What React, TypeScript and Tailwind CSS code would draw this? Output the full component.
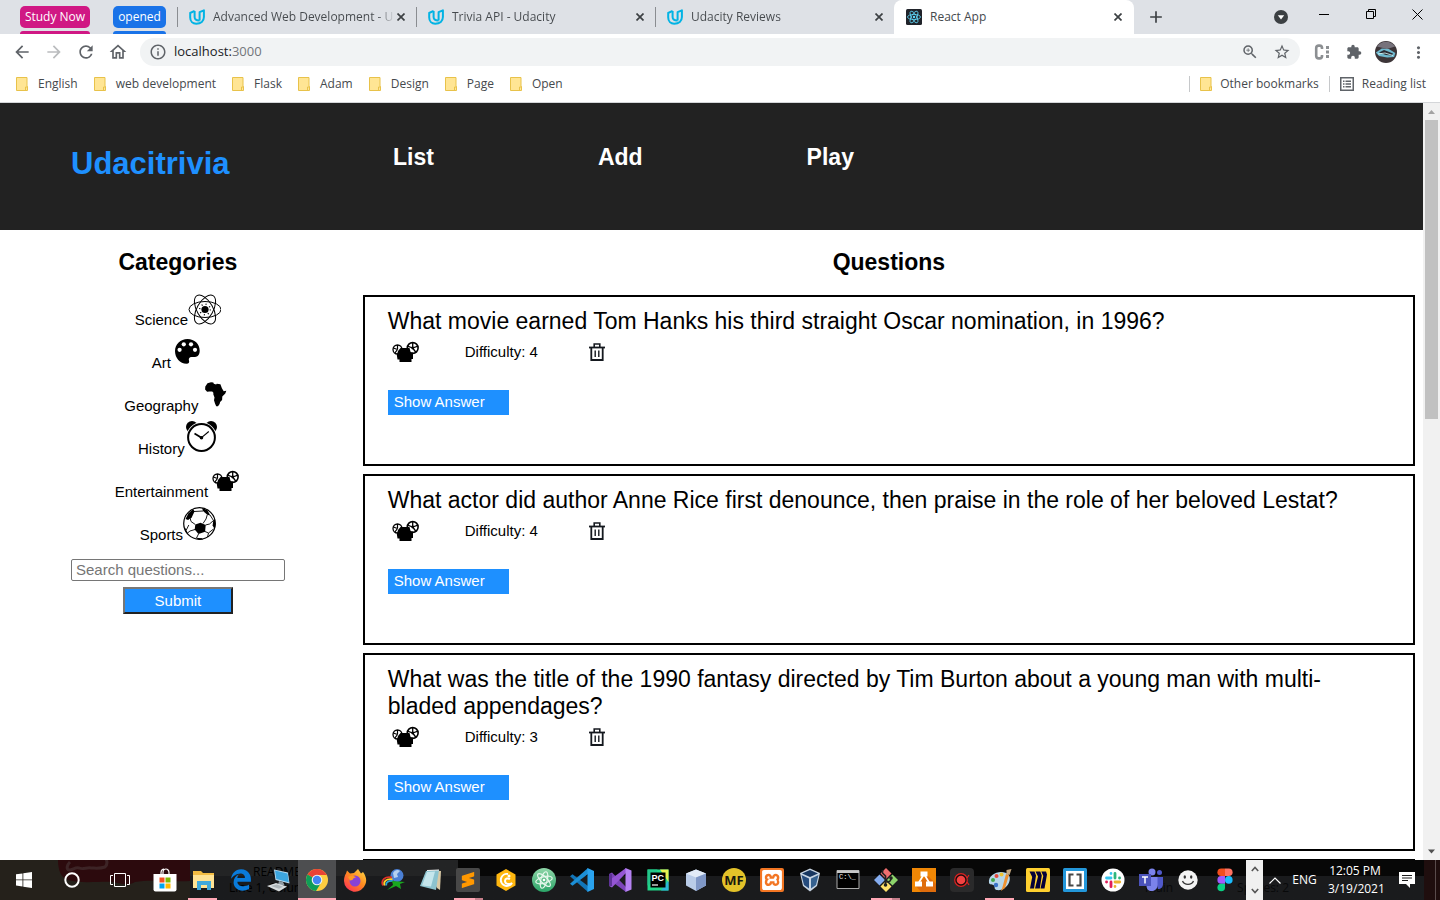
import React from "react";
import {
  MdAdd,
  MdArrowBack,
  MdArrowForward,
  MdExtension,
  MdInfoOutline,
  MdMoreVert,
  MdOutlineHome,
  MdRefresh,
  MdStarBorder,
  MdZoomIn,
} from "react-icons/md";
import { FaEdgeLegacy } from "react-icons/fa";
import { SiSublimetext, SiXampp } from "react-icons/si";

/* ---------- browser icons ---------- */

function UdacityIcon() {
  return (
    <svg className="size-4 shrink-0" viewBox="0 0 16 16" fill="none" stroke="#02b3e4" strokeWidth="2" strokeLinejoin="round" aria-hidden="true">
      <path d="M5.6 1.9 1.2 4v4.6c0 3.8 2.6 6.2 6 6.2 4.6 0 7.7-2.5 7.7-6.7V1.300l-4.300 1.900v8.200" />
      <path d="M5.6 1.900v6c0 2.400 1.700 3.700 5 3.500" />
    </svg>
  );
}

function ReactFavicon() {
  return (
    <svg className="size-4 shrink-0" viewBox="0 0 16 16" aria-hidden="true">
      <rect width="16" height="16" rx="1.5" fill="#20232a" />
      <g fill="none" stroke="#61dafb" strokeWidth=".8">
        <ellipse cx="8" cy="8" rx="6.5" ry="2.6" />
        <ellipse cx="8" cy="8" rx="6.5" ry="2.6" transform="rotate(60 8 8)" />
        <ellipse cx="8" cy="8" rx="6.5" ry="2.6" transform="rotate(120 8 8)" />
      </g>
      <circle cx="8" cy="8" r="1.2" fill="#61dafb" />
    </svg>
  );
}

function FolderIcon() {
  return (
    <svg className="h-[14px] w-3 shrink-0" viewBox="0 0 12 14" aria-hidden="true">
      <path d="M.5.5h10.500v9h.5v4H.5z" fill="#ffe594" stroke="#e8c24a" />
      <path d="M9.500 13.500v-3.500h2" fill="none" stroke="#e8c24a" />
    </svg>
  );
}

/* ---------- trivia icons, all on a 33px square ---------- */

function ScienceIcon() {
  return (
    <svg className="size-[33px] shrink-0" viewBox="0 0 33 33" aria-hidden="true">
      <g fill="none" stroke="#000" strokeWidth="1">
        <ellipse cx="17" cy="17.5" rx="16" ry="8" />
        <ellipse cx="17" cy="17.5" rx="16" ry="8" transform="rotate(60 17 17.5)" />
        <ellipse cx="17" cy="17.5" rx="16" ry="8" transform="rotate(120 17 17.5)" />
        <circle cx="17" cy="17.5" r="5.3" strokeDasharray="1 3.16" strokeWidth="1.4" />
      </g>
      <circle cx="17" cy="17.5" r="3.6" />
    </svg>
  );
}

function ArtIcon() {
  return (
    <svg className="size-[33px] shrink-0" viewBox="0 0 33 33" aria-hidden="true">
      <path d="M16.500 4C9.500 4 4 9.200 4 16c0 7 5 12.500 11.500 12.800 2.500 0 3-1.500 2.500-3-.6-2.300.2-3.800 2.500-3.900 3 .1 4.500.3 6.200-.9 1.400-1 2-3 2-5.200C28.700 9 23.500 4 16.500 4z" />
      <circle cx="12.8" cy="9.3" r="2.1" fill="#fff" />
      <circle cx="20" cy="9.3" r="2.1" fill="#fff" />
      <circle cx="8.6" cy="14.8" r="2.1" fill="#fff" />
      <circle cx="24" cy="14.8" r="2.1" fill="#fff" />
    </svg>
  );
}

function GeographyIcon() {
  return (
    <svg className="size-[33px] shrink-0" viewBox="0 0 33 33" aria-hidden="true">
      <path d="M9.500 5.200 13 4.200l2.300.2.500 1.300 2.300.9.700-.9 3.600.6 1.500 4 1.800 2.900 2.600-.4-1 2.600-3 3.200-.2 3.500-2 1.800-.5 2-1.600 2.300-1.800.1-1.200-2.800-1-3.200.5-2.800-1.200-3.300.1-1.500-1.200-1.200-2.800.1-2.300.2-2-2.300.2-3z" />
    </svg>
  );
}

function HistoryIcon() {
  return (
    <svg className="size-[33px] shrink-0" viewBox="0 0 33 33" aria-hidden="true">
      <circle cx="7" cy="6" r="6" />
      <circle cx="26" cy="6" r="6" />
      <circle cx="16.5" cy="16.5" r="15.2" fill="#fff" />
      <circle cx="16.5" cy="16.5" r="13.4" fill="#fff" stroke="#000" strokeWidth="2" />
      <path d="m16.500 16.700-7-4.200" stroke="#000" strokeWidth="1.8" />
      <path d="m16.500 16.700 7.300-6.200" stroke="#000" strokeWidth="1.1" />
      <circle cx="16.5" cy="16.7" r="1.8" />
    </svg>
  );
}

function EntertainmentIcon() {
  return (
    <svg className="size-[33px] shrink-0" viewBox="0 0 33 33" aria-hidden="true">
      <g fill="#fff" stroke="#000">
        <circle cx="9.5" cy="14.5" r="4.5" strokeWidth="1.3" />
        <path d="M9.500 14.500V10M9.500 14.500l-4.200-1.500M9.500 14.500l-2.700 3.700" strokeWidth="1.2" />
        <circle cx="24.7" cy="13" r="5.4" strokeWidth="1.6" />
        <path d="M24.700 13V8M24.700 13l-5.200-1.800M24.700 13l3.300 4.500M24.700 13l5.200-1.800" strokeWidth="1.300" />
      </g>
      <circle cx="24.7" cy="13" r="1.4" />
      <path d="M10 16l2.500-3h9l1.200 4.500H25v6.500h-1.500v3h-12v-2.500H9.500l-.7-4.500z" />
    </svg>
  );
}

function SportsIcon() {
  return (
    <svg className="size-[33px] shrink-0" viewBox="0 0 33 33" aria-hidden="true">
      <circle cx="16.5" cy="16.5" r="15.8" fill="#fff" stroke="#000" strokeWidth="1.2" />
      <path d="m12.300 17.500 5.200-1.800 5.200 2.200-.6 6.800-6.600 2.300-3.800-4.500z" />
      <path d="M5.500 6.200 10.300 2l1.200 2.500-2.700 5.800-3.700 2.700-2.600-1z" />
      <path d="m19 .9 5.300 2 3 5.500-3-.7-4.300-3.700z" />
      <path d="m32 12 .6 5.500-1 4.500-2-3.500.7-5z" />
      <path d="M1 18.500 3.300 23l2.500 5.500-3.300-4.300z" />
      <path d="m12.500 30.800 6.500.5 1 1.300-4 .2z" />
      <path
        d="M20 16.500 23 12l1.300-4.300M12.300 17.500 8 14.500l-1-4M22.500 18l4-1 4-3.500M22 24.500l3.500 1.500 5-4M15.500 27l-2 4M3.300 23l2.500-5M11 4.500l9-.5M25.500 26l-1 4M27 8l3.500 5.500M12 22.500l-5 1.500-2.500 2"
        fill="none"
        stroke="#000"
        strokeWidth=".9"
      />
    </svg>
  );
}

function TrashIcon() {
  return (
    <svg className="h-[18px] w-4" viewBox="0 0 16 18" fill="none" stroke="#15191f" aria-hidden="true">
      <path d="M0 4.500h16" strokeWidth="1.8" />
      <path d="M5.200 4V1h5.600V4" strokeWidth="1.6" />
      <path d="M2.300 4.500v12.500h11.400V4.500" strokeWidth="1.8" />
      <path d="M6.200 7.500v6.500M9.800 7.500v6.500" strokeWidth="1.4" />
    </svg>
  );
}

/* ---------- browser window ---------- */

const tabs = [
  { title: "Advanced Web Development - U", icon: <UdacityIcon /> },
  { title: "Trivia API - Udacity", icon: <UdacityIcon /> },
  { title: "Udacity Reviews", icon: <UdacityIcon /> },
];

function CloseTab({ label }: { label: string }) {
  return (
    <button type="button" aria-label={`Close ${label}`} className="flex size-4 shrink-0 items-center justify-center">
      <svg className="size-2" viewBox="0 0 8 8" stroke="#3c4043" strokeWidth="1.7" aria-hidden="true">
        <path d="m.5.5 7 7m0-7-7 7" />
      </svg>
    </button>
  );
}

function TabStrip() {
  return (
    <div className="flex h-[34px] shrink-0 bg-[#dee1e6] text-xs text-[#45494d]">
      <div className="flex w-[177px] shrink-0 gap-[23px] pl-5 pt-[6px] text-white">
        <div className="flex w-[70px] flex-col gap-[3px]">
          <button type="button" className="h-[22px] whitespace-nowrap rounded-[5px] bg-[#d01884]">Study Now</button>
          <span className="h-[3px] rounded-t-sm bg-[#d01884]" />
        </div>
        <div className="flex w-[53px] flex-col gap-[3px]">
          <button type="button" className="h-[22px] rounded-[5px] bg-[#1a73e8]">opened</button>
          <span className="h-[3px] rounded-t-sm bg-[#1a73e8]" />
        </div>
      </div>
      {tabs.map((t) => (
        <div key={t.title} className="flex w-[239px] min-w-0 items-center">
          <span className="h-5 w-px bg-[#8a8d91]" />
          <span className="ml-[11px] flex">{t.icon}</span>
          <span className="ml-2 w-[182px] whitespace-nowrap bg-linear-to-r from-[#45494d] from-90% to-[#dee1e6] bg-clip-text text-transparent">
            {t.title}
          </span>
          <span className="-ml-[2px] flex"><CloseTab label={t.title} /></span>
        </div>
      ))}
      <div className="flex w-60 items-center rounded-t-lg bg-white pl-3">
        <ReactFavicon />
        <span className="ml-2 flex-1">React App</span>
        <span className="mr-2 flex"><CloseTab label="React App" /></span>
      </div>
      <button type="button" aria-label="New tab" className="ml-3 text-[#3c4043]"><MdAdd className="size-5" /></button>
      <div className="ml-auto flex items-center text-black">
        <button type="button" aria-label="Search tabs" className="mr-[31px]">
          <svg className="size-[14px]" viewBox="0 0 14 14" aria-hidden="true">
            <circle cx="7" cy="7" r="7" fill="#3c4043" />
            <path d="M3.800 5.300h6.400L7 9.600z" fill="#fff" />
          </svg>
        </button>
        <button type="button" aria-label="Minimize" className="mb-[6px] mr-9">
          <svg className="size-[11px]" viewBox="0 0 11 11" stroke="#000" aria-hidden="true"><path d="M0 5.500h10" /></svg>
        </button>
        <button type="button" aria-label="Restore" className="mb-[6px] mr-9">
          <svg className="size-[10px]" viewBox="0 0 10 10" fill="none" stroke="#000" aria-hidden="true"><path d="M.5 2.500h7v7h-7zM2.500 2.500v-2h7v7h-2" /></svg>
        </button>
        <button type="button" aria-label="Close window" className="mb-[6px] mr-[17px]">
          <svg className="size-[11px]" viewBox="0 0 11 11" stroke="#000" aria-hidden="true"><path d="m.5.5 10 10m0-10-10 10" /></svg>
        </button>
      </div>
    </div>
  );
}

function Toolbar() {
  return (
    <div className="flex h-9 shrink-0 items-center text-[#5f6368]">
      <div className="flex gap-3 pl-3">
        <button type="button" aria-label="Back"><MdArrowBack className="size-5" /></button>
        <button type="button" aria-label="Forward" className="text-[#babcbe]"><MdArrowForward className="size-5" /></button>
        <button type="button" aria-label="Reload"><MdRefresh className="size-5" /></button>
        <button type="button" aria-label="Home"><MdOutlineHome className="size-5" /></button>
      </div>
      <div className="ml-3 flex h-7 flex-1 items-center rounded-full bg-[#f1f3f4] px-[9px]">
        <MdInfoOutline className="size-[18px]" />
        <a href="#" className="ml-[7px] flex-1 text-[13px] text-[#202124]">localhost:<span className="text-[#72767a]">3000</span></a>
        <button type="button" aria-label="Zoom" className="mr-[14px]"><MdZoomIn className="size-[18px]" /></button>
        <button type="button" aria-label="Bookmark this page"><MdStarBorder className="size-[18px]" /></button>
      </div>
      <div className="ml-[14px] flex items-center">
        <button type="button" aria-label="Color tool">
          <svg className="size-4" viewBox="0 0 16 16" aria-hidden="true">
            <path d="M8 5V3.500A2.300 2.300 0 0 0 5.700 1.600h-1A2.500 2.500 0 0 0 2.200 4v8a2.500 2.500 0 0 0 2.500 2.400h1A2.300 2.300 0 0 0 8 12.500V11" fill="none" stroke="#8c8f92" strokeWidth="2.6" />
            <path d="M12 2h3v3h-3zm0 4.500h3v3h-3zM12 11h3v3h-3z" fill="#8c8f92" />
          </svg>
        </button>
        <button type="button" aria-label="Extensions" className="ml-4"><MdExtension className="size-4" /></button>
        <button type="button" aria-label="Profile" className="ml-[13px]">
          <svg className="size-[22px]" viewBox="0 0 22 22" aria-hidden="true">
            <circle cx="11" cy="11" r="11" fill="#3d3538" />
            <path d="M2 5.500a11 11 0 0 1 18 0L12 8z" fill="#77737c" />
            <path d="m.8 11.500 6-4 7 .5 6.500 4-1.200 4-7 .5-8-1.500z" fill="#6fb9cf" />
            <path d="m4 11.500 5-2.500 4 1.500 5 2-1 2-6-.5z" fill="#2b2b33" />
            <path d="m3 13 7-1 8 2.500" fill="none" stroke="#dff" strokeWidth=".8" />
          </svg>
        </button>
        <button type="button" aria-label="Menu" className="ml-3 mr-3"><MdMoreVert className="size-[19px]" /></button>
      </div>
    </div>
  );
}

const bookmarks = ["English", "web development", "Flask", "Adam", "Design", "Page", "Open"];

function BookmarksBar() {
  return (
    <nav aria-label="Bookmarks" className="flex h-[33px] shrink-0 items-center border-b border-[#d4d6d9] pb-1 pl-4 text-xs text-[#45494d]">
      <div className="flex gap-4">
        {bookmarks.map((b) => (
          <a key={b} href="#" className="flex items-center gap-[10px] whitespace-nowrap"><FolderIcon />{b}</a>
        ))}
      </div>
      <div className="ml-auto flex items-center whitespace-nowrap pr-[14px]">
        <span className="mr-[10px] h-4 w-px bg-[#c6c8ca]" />
        <a href="#" className="flex items-center gap-2"><FolderIcon />Other bookmarks</a>
        <span className="mx-[10px] h-4 w-px bg-[#c6c8ca]" />
        <button type="button" className="flex items-center gap-2">
          <svg className="size-[14px]" viewBox="0 0 14 14" fill="none" stroke="#5f6368" aria-hidden="true">
            <path d="M.75.75h12.500v12.500H.75z" strokeWidth="1.5" />
            <path d="M3 4.200h1.500M3 7h1.500M3 9.800h1.500M5.500 4.200H11M5.500 7H11M5.500 9.800H11" strokeWidth="1.4" />
          </svg>
          Reading list
        </button>
      </div>
    </nav>
  );
}

/* ---------- trivia page ---------- */

const categories = [
  { name: "Science", Icon: ScienceIcon },
  { name: "Art", Icon: ArtIcon },
  { name: "Geography", Icon: GeographyIcon },
  { name: "History", Icon: HistoryIcon },
  { name: "Entertainment", Icon: EntertainmentIcon },
  { name: "Sports", Icon: SportsIcon },
];

const questions = [
  { text: "What movie earned Tom Hanks his third straight Oscar nomination, in 1996?", difficulty: 4 },
  { text: "What actor did author Anne Rice first denounce, then praise in the role of her beloved Lestat?", difficulty: 4 },
  { text: "What was the title of the 1990 fantasy directed by Tim Burton about a young man with multi-bladed appendages?", difficulty: 3 },
];

function TriviaPage() {
  return (
    <div className="min-w-0 flex-1 overflow-hidden bg-white font-['Liberation_Sans',Arial,sans-serif] text-[15px] text-black">
      <header className="flex h-[127px] bg-[#222] pl-[71px] text-white">
        <h1 className="w-[322px] pt-[41px] text-[31px] font-bold leading-10 text-[#1e90ff]">Udacitrivia</h1>
        <nav className="flex gap-[164px] pt-10 text-[23px] font-bold leading-7">
          <a href="#">List</a>
          <a href="#">Add</a>
          <a href="#">Play</a>
        </nav>
      </header>
      <main className="flex">
        <aside className="flex w-1/4 flex-col items-center">
          <h2 className="pb-4 pt-[18px] text-[23px] font-bold leading-7">Categories</h2>
          <ul className="flex flex-col items-center">
            {categories.map(({ name, Icon }) => (
              <li key={name} className="h-[43px]">
                <a href="#" className="flex items-baseline">{name}<Icon /></a>
              </li>
            ))}
          </ul>
          <form className="flex w-full flex-col items-center gap-[6px] px-[71px] pt-[9px]" onSubmit={(e) => e.preventDefault()}>
            <input
              type="text"
              aria-label="Search questions"
              placeholder="Search questions..."
              className="h-[22px] w-full rounded-xs border border-[#767676] px-1 placeholder:text-[#757575]"
            />
            <button type="submit" className="h-[27px] w-[110px] border-2 border-b-[#222] border-l-[#767676] border-r-[#222] border-t-[#767676] bg-[#1e90ff] leading-5 text-white">
              Submit
            </button>
          </form>
        </aside>
        <section className="flex w-3/4 flex-col gap-2 pl-[7px] pr-2">
          <h2 className="pb-[11px] pt-[18px] text-center text-[23px] font-bold leading-7">Questions</h2>
          {questions.map((q) => (
            <article key={q.text} className="border-2 border-black pb-[49px] pl-[23px] pr-10 pt-[11px]">
              <h3 className="text-[23px] leading-[27px]">{q.text}</h3>
              <div className="flex h-[33px] items-center">
                <EntertainmentIcon />
                <span className="ml-11 w-[124px] pt-px">Difficulty: {q.difficulty}</span>
                <button type="button" aria-label="Delete question"><TrashIcon /></button>
              </div>
              <button type="button" className="mt-[22px] block h-[25px] w-[121px] bg-[#1e90ff] pl-[6px] text-left text-white">
                Show Answer
              </button>
            </article>
          ))}
          <div className="h-40 border-2 border-black" />
        </section>
      </main>
    </div>
  );
}

function Scrollbar() {
  return (
    <div aria-hidden="true" className="flex w-[17px] shrink-0 flex-col items-center bg-[#f1f1f1]">
      <svg className="size-[17px]" viewBox="0 0 17 17"><path d="M5 11h7L8.500 7z" fill="#a3a3a3" /></svg>
      <div className="h-[299px] w-[13px] bg-[#c1c1c1]" />
      <svg className="mt-auto size-[17px]" viewBox="0 0 17 17"><path d="M5 6.500h7l-3.500 4z" fill="#505050" /></svg>
    </div>
  );
}

/* ---------- taskbar ---------- */

const glyph = "size-6";

const apps: { name: string; art: React.ReactNode; state?: "open" | "active" | "multi" }[] = [
  {
    name: "Store",
    art: (
      <svg className={glyph} viewBox="0 0 24 24">
        <path d="M8 6V4.500C8 2.500 9.500 1 11 1M16 6V4.500c0-2-1.500-3.500-3-3.500s-3 1.500-3 3.500V6" fill="none" stroke="#fff" strokeWidth="1.2" />
        <path d="M.5 6h23v15.500a2 2 0 0 1-2 2h-19a2 2 0 0 1-2-2z" fill="#fff" />
        <path d="M6.500 9.500h5v5h-5z" fill="#f25022" /><path d="M12.500 9.500h5v5h-5z" fill="#7fba00" />
        <path d="M6.500 15.500h5v5h-5z" fill="#00a4ef" /><path d="M12.500 15.500h5v5h-5z" fill="#ffb900" />
      </svg>
    ),
  },
  {
    name: "File Explorer",
    state: "open",
    art: (
      <svg className={glyph} viewBox="0 0 24 24">
        <path d="M2 3h8l2 2h11v15H2z" fill="#f3bd43" /><path d="M2 7h21v13H2z" fill="#ffe394" />
        <path d="M6 13h14v9h-4v-5h-6v5H6z" fill="#3fa9dc" />
      </svg>
    ),
  },
  { name: "Edge", art: <FaEdgeLegacy className="size-[22px] text-[#0a7bdb]" /> },
  {
    name: "Remote",
    art: (
      <svg className={glyph} viewBox="0 0 24 24">
        <path d="m7 1.500 14 3 1.500 11L8.500 12z" fill="#b9d9ee" /><path d="m8 2.500 12.500 3 1.300 8.800L9.300 11z" fill="#3da6df" />
        <path d="m12 13 4 1 1.500 3H11z" fill="#8f9ba3" /><path d="m0 18 9-3 11 3.500-8 5z" fill="#d7dcde" /><path d="m4 18 6-1.500 6 2.200-4 2z" fill="#aeb6ba" />
      </svg>
    ),
  },
  {
    name: "Chrome",
    state: "active",
    art: (
      <svg className={glyph} viewBox="0 0 24 24">
        <circle cx="12" cy="12" r="11" fill="#ffcd40" />
        <path d="M12 12 2.500 6.500A11 11 0 0 1 21.500 6.500H12z" fill="#e94335" />
        <path d="M2.500 6.500A11 11 0 0 0 11 23l5.500-9L12 12z" fill="#0f9d58" />
        <path d="M12 6.500h9.500" stroke="#e94335" />
        <circle cx="12" cy="12" r="5.3" fill="#f1f1f1" /><circle cx="12" cy="12" r="4.2" fill="#4285f4" />
      </svg>
    ),
  },
  {
    name: "Firefox",
    art: (
      <svg className={glyph} viewBox="0 0 24 24">
        <defs><linearGradient id="fx" x1="1" y1="0" x2=".2" y2="1"><stop offset="0" stopColor="#ffe04a" /><stop offset=".5" stopColor="#ff8a1f" /><stop offset="1" stopColor="#ff3156" /></linearGradient></defs>
        <path d="M3 5.500 4 2.500l3 3 4-.5 4-4 3 4.500 2-1.500c3 4 4 8 2.500 12A11 11 0 0 1 1 13c0-3 .6-5.500 2-7.500z" fill="url(#fx)" />
        <circle cx="12" cy="13" r="5.5" fill="#8742d8" /><path d="M5 9c3-2 6-1.500 8 .5-2 0-3 1-3.500 2.500L7 12.500z" fill="#ff9a25" />
      </svg>
    ),
  },
  {
    name: "Download Manager",
    art: (
      <svg className={glyph} viewBox="0 0 24 24" fill="none">
        <circle cx="16" cy="7.500" r="6.500" fill="#4a7fd4" /><path d="M12 5c1.500-3 5-4 7-2l-3 3 1 3-4 1z" fill="#b5d0f0" />
        <path d="M2 17.500C-.5 12 4 8 11 9.500" stroke="#e23327" strokeWidth="1.800" /><path d="M3.700 17.500C2 13.500 5 10.500 11.500 11.300" stroke="#ffd42a" strokeWidth="1.800" /><path d="M5.400 17.500C4.500 14.500 7 12.500 12 13" stroke="#2aa7d8" strokeWidth="1.700" />
        <path d="m11 13 13 1-5 2 1 5-5-3-9 4 6-5z" fill="#19a81e" />
      </svg>
    ),
  },
  {
    name: "Notepad",
    art: (
      <svg className={glyph} viewBox="0 0 24 24">
        <path d="m8 2 14 1-1 19-3-2z" fill="#d8c9a6" /><path d="m7 3 13-1-3 20L1 18z" fill="#8cc3cf" /><path d="m8 4 8-.5-4 15-9-1z" fill="#c5e6ec" /><path d="M8 2.500 20 2" stroke="#eee" />
      </svg>
    ),
  },
  { name: "Sublime Text", state: "multi", art: <span className="flex size-6 items-center justify-center rounded-xs bg-[#484848]"><SiSublimetext className="size-4 text-[#ff9800]" /></span> },
  {
    name: "Coin",
    art: (
      <svg className={glyph} viewBox="0 0 24 24">
        <path d="m12 1 9.500 5.500v11L12 23l-9.500-5.500v-11z" fill="#ffb70f" />
        <path d="M14 6a6 6 0 1 0 4 9c-3 2-7 1-7-2s3-3 5-2" fill="none" stroke="#fff" strokeWidth="2" /><circle cx="15" cy="8" r="1.5" fill="#fff" />
      </svg>
    ),
  },
  {
    name: "Atom",
    art: (
      <svg className={glyph} viewBox="0 0 24 24">
        <defs><linearGradient id="atom" x1="0" y1="0" x2="0" y2="1"><stop offset="0" stopColor="#8fd6a8" /><stop offset="1" stopColor="#2ba568" /></linearGradient></defs>
        <circle cx="12" cy="12" r="12" fill="url(#atom)" />
        <g fill="none" stroke="#e6f7ec" strokeWidth="1.2">
          <ellipse cx="12" cy="12" rx="8.5" ry="3.2" transform="rotate(-15 12 12)" />
          <ellipse cx="12" cy="12" rx="8.5" ry="3.2" transform="rotate(45 12 12)" />
          <ellipse cx="12" cy="12" rx="8.5" ry="3.2" transform="rotate(105 12 12)" />
        </g>
        <circle cx="12" cy="12" r="1.3" fill="#fff" />
      </svg>
    ),
  },
  {
    name: "Visual Studio Code",
    art: (
      <svg className={glyph} viewBox="0 0 24 24">
        <path d="m0 8.200 2.500-1.900L18 18v6z" fill="#1275b8" /><path d="m0 15.800 2.500 1.900L18 6V0z" fill="#1c8fd6" /><path d="m17.500 0 6.500 3v18l-6.500 3z" fill="#2aa3ee" />
      </svg>
    ),
  },
  {
    name: "Visual Studio",
    art: (
      <svg className={glyph} viewBox="0 0 24 24">
        <path d="m1 6 3-1.500L18 19v5L3 13z" fill="#7b44b8" /><path d="m1 18 3 1.500L18 5V0L3 11z" fill="#9455d3" /><path d="M1 6h3v12H1z" fill="#5f3398" /><path d="m17.500 0 6 2.500v19l-6 2.500z" fill="#b582f2" />
      </svg>
    ),
  },
  {
    name: "PyCharm",
    art: (
      <svg className={glyph} viewBox="0 0 24 24">
        <path d="M1.500 1.500h21v21h-21z" fill="#21d789" /><path d="M1.500 1.500h10l-3 12-7 4z" fill="#23c68a" /><path d="M22.500 12v10.500H15z" fill="#2cb6d8" /><path d="M14 1.500h8.500V14z" fill="#e9f250" /><path d="M4.500 4.500h15v15h-15z" fill="#000" />
        <text x="5.5" y="12.5" fontSize="9" fontWeight="700" fill="#fff" fontFamily="Liberation Sans, sans-serif">PC</text><path d="M6 17h6" stroke="#fff" strokeWidth="1.2" />
      </svg>
    ),
  },
  {
    name: "Cube",
    art: (
      <svg className={glyph} viewBox="0 0 24 24">
        <path d="m12 1.500 10 4v12l-10 5.500-10-5.500v-12z" fill="#b9cce8" /><path d="m12 1.500 10 4-10 4-10-4z" fill="#e2ebf7" /><path d="m12 9.500 10-4v12L12 23z" fill="#7f97c6" />
      </svg>
    ),
  },
  {
    name: "MF",
    art: (
      <svg className={glyph} viewBox="0 0 24 24">
        <circle cx="12" cy="12" r="12" fill="#e3c229" /><text x="12" y="16.5" textAnchor="middle" fontSize="13" fontWeight="700" fill="#17170f" fontFamily="Open Sans, sans-serif">MF</text>
      </svg>
    ),
  },
  { name: "XAMPP", art: <span className="flex size-6 items-center justify-center rounded-xs bg-[#f37623]"><SiXampp className="size-5 text-white" /></span> },
  {
    name: "VirtualBox",
    art: (
      <svg className={glyph} viewBox="0 0 24 24">
        <path d="m12 .5 10 4.500-3 13-7 5.500L5 18 2 5z" fill="#c8d5e3" /><path d="m12 2 8 3.500-8 3.500-8-3.500z" fill="#17365f" /><path d="m3.500 7 7.500 3.500v10L6 17z" fill="#254b7c" /><path d="M20.500 7 13 10.500v10l5-3.500z" fill="#35618f" />
      </svg>
    ),
  },
  {
    name: "Command Prompt",
    art: (
      <svg className={glyph} viewBox="0 0 24 24">
        <path d="M1 2.500h22v18H1z" fill="#000" stroke="#aaa" /><path d="M1 2.500h22v2.500H1z" fill="#c7c7c7" />
        <text x="3" y="11" fontSize="7" fill="#eee" fontFamily="Liberation Mono, monospace">C:\_</text>
      </svg>
    ),
  },
  {
    name: "Git",
    state: "multi",
    art: (
      <svg className={glyph} viewBox="0 0 24 24">
        <path d="m12 0 5.500 5.500L12 11 6.500 5.500z" fill="#ef6e6e" /><path d="m5.500 6.500 5.500 5.500-5.500 5.500L0 12z" fill="#85adf0" /><path d="m18.500 6.500L24 12l-5.500 5.500L13 12z" fill="#8ed56b" /><path d="m12 13 5.500 5.500L12 24l-5.500-5.500z" fill="#ffe16a" />
        <path d="M8.500 2v3l3 3v8M12 14c4 0 5-1 5-4" fill="none" stroke="#222" strokeWidth="1.7" /><circle cx="11.5" cy="17" r="1.8" fill="#222" /><circle cx="17" cy="10" r="1.8" fill="#222" />
      </svg>
    ),
  },
  {
    name: "Diagrams",
    art: (
      <svg className={glyph} viewBox="0 0 24 24">
        <path d="M0 0h24v24H0z" fill="#f08705" /><path d="m15 7 9 9v8H9l-5-6z" fill="#df6c0c" /><path d="m12 6-6 10M12 6l6 10" stroke="#fff" strokeWidth="1.7" />
        <path d="M8.500 3.500h7v5h-7zM3 13.500h7v5H3zM14 13.500h7v5h-7z" fill="#fff" />
      </svg>
    ),
  },
  {
    name: "Recorder",
    art: (
      <svg className={glyph} viewBox="0 0 24 24">
        <rect width="24" height="24" rx="4" fill="#2a2a2b" /><circle cx="11" cy="12" r="6.3" fill="#180c0c" stroke="#dc2222" strokeWidth="1.2" /><circle cx="11" cy="12" r="4.3" fill="#f34242" /><path d="m17 10 2-3M17 14l2 3" stroke="#dc2222" strokeWidth="1.2" />
      </svg>
    ),
  },
  {
    name: "Paint",
    state: "open",
    art: (
      <svg className={glyph} viewBox="0 0 24 24">
        <path d="M1 15C0 8 7 4 13 4c7 0 10 4 8.500 9-1.500 6-7.500 10-13 9-3-1-1-3-2.500-4.500S1.500 17 1 15z" fill="#b7d7ea" />
        <circle cx="5" cy="12" r="2" fill="#45a74b" /><circle cx="8.500" cy="8" r="2" fill="#e44a3c" /><circle cx="13.500" cy="6.500" r="2" fill="#f0c431" /><circle cx="8" cy="17" r="2.200" fill="#3b74c7" />
        <path d="m13 23 1.500-4L18 6l3 1-4 13z" fill="#ef9130" /><path d="m18.500 6 0-4 5-1-2 6z" fill="#c6a77e" />
      </svg>
    ),
  },
  {
    name: "Miro",
    art: (
      <svg className={glyph} viewBox="0 0 24 24">
        <rect width="24" height="24" rx="1.5" fill="#ffd02f" />
        <path d="M3.500 3.500h5l1.500 4-2 13H4L6.200 9zM9.500 3.500h4.800l1.500 4-2 13h-4.800L12 8.500zM15.300 3.500H20l1 3-2.500 14h-4L17.300 8z" fill="#050038" />
      </svg>
    ),
  },
  {
    name: "Brackets",
    art: (
      <svg className={glyph} viewBox="0 0 24 24">
        <rect width="24" height="24" rx="1.5" fill="#2397da" /><path d="M3 3h18v18H3z" fill="#fff" /><path d="M10.500 6.500H6.500v11h4M13.500 6.500h4v11h-4" fill="none" stroke="#474747" strokeWidth="2.2" />
      </svg>
    ),
  },
  {
    name: "Slack",
    art: (
      <svg className={glyph} viewBox="0 0 24 24">
        <circle cx="12" cy="12" r="11.5" fill="#fff" />
        <g strokeWidth="2.8" strokeLinecap="round">
          <path d="M10 5.500v.1M5.500 10h4.500" stroke="#36c5f0" /><path d="M14 5.500V10M18.500 10h.1" stroke="#2eb67d" />
          <path d="M14 14h4.700M14 18.500v.1" stroke="#ecb22e" /><path d="M10 14v4.700M5.500 14h.1" stroke="#e01e5a" />
        </g>
      </svg>
    ),
  },
  {
    name: "Teams",
    art: (
      <svg className={glyph} viewBox="0 0 24 24">
        <circle cx="13" cy="4" r="3.5" fill="#7b83eb" /><circle cx="20.5" cy="4.5" r="2.5" fill="#5059c9" /><path d="M16 9h8v7c0 3-2 5-5 5z" fill="#5059c9" /><path d="M8 9h10.500v8c0 4-3 6-6 6s-5-2-5-5z" fill="#7b83eb" />
        <path d="M0 6h12v12H0z" fill="#4b53bc" /><path d="M3 9h6M6 9v6.500" stroke="#fff" strokeWidth="1.5" />
      </svg>
    ),
  },
  {
    name: "Smile",
    art: (
      <svg className={glyph} viewBox="0 0 24 24">
        <circle cx="11" cy="12" r="9.7" fill="#f3f3f3" /><ellipse cx="7.8" cy="9" rx="1.2" ry="1.8" fill="#333" /><ellipse cx="14.2" cy="9" rx="1.2" ry="1.8" fill="#333" /><path d="M5.500 13c2 4.500 9 4.500 11 0" fill="none" stroke="#333" strokeWidth="1.3" />
      </svg>
    ),
  },
  {
    name: "Figma",
    art: (
      <svg className={glyph} viewBox="0 0 24 24">
        <path d="M10 .5H6.200a3.800 3.800 0 0 0 0 7.600H10z" fill="#f24e1e" /><path d="M10 .5h3.800a3.800 3.800 0 0 1 0 7.600H10z" fill="#ff7262" /><path d="M10 8.100H6.200a3.800 3.800 0 0 0 0 7.600H10z" fill="#a259ff" /><circle cx="13.8" cy="11.9" r="3.8" fill="#1abcfe" /><path d="M10 15.700H6.200A3.800 3.800 0 1 0 10 19.500z" fill="#0acf83" />
      </svg>
    ),
  },
];

function Taskbar() {
  return (
    <footer className="relative flex h-10 shrink-0 overflow-hidden bg-[#17181a] text-xs text-white">
      {/* windows and wallpaper showing through the translucent bar */}
      <div aria-hidden="true" className="absolute inset-0 flex">
        <div className="w-[190px] shrink-0 bg-[#25211b]">
          <svg className="h-10 w-[190px]" viewBox="0 0 190 40">
            <path d="M58 0c0 10 3 18 10 20 14 4 32 1 45 2 8 2 16 4 22 0 14-3 36 0 55-1V0z" fill="#2c0a0d" />
            <path d="M70 2c-3 3-4 7-1 8 4 0 6-3 10-2 4 2 8-1 12 0 4 0 8 1 14-1 3-3 2-6 1-8" fill="none" stroke="#3d2426" strokeWidth="3" />
          </svg>
        </div>
        <div className="flex w-[268px] shrink-0 flex-col bg-linear-to-b from-[#232425] from-40% to-[#1a1b1d] to-40% pl-[63px] text-xs leading-4 text-black">
          <span className="pt-1">README.md</span>
          <span className="-ml-6">Line 1, Column 1</span>
        </div>
        <div className="flex flex-1 items-end justify-end gap-16 bg-linear-to-b from-[#070707] from-40% to-[#1a1b1d] to-40% pb-1 pr-[135px] text-xs text-[#08090a]">
          <span>main</span>
          <span>Spaces: 2</span>
        </div>
        <div className="w-4 shrink-0 bg-[#1f0e0e]" />
      </div>
      <div className="relative flex flex-1">
        <button type="button" aria-label="Start" className="flex w-12 items-center justify-center">
          <svg className="size-4" viewBox="0 0 16 16" fill="#fff"><path d="m0 2.300 6.500-.9v6.100H0zM7.300 1.300 16 0v7.500H7.300zM0 8.300h6.500v6.200L0 13.600zM7.300 8.300H16V16l-8.700-1.300z" /></svg>
        </button>
        <button type="button" aria-label="Cortana" className="flex w-12 items-center justify-center">
          <svg className="size-4" viewBox="0 0 16 16"><circle cx="8" cy="8" r="6.7" fill="none" stroke="#fff" strokeWidth="2" /></svg>
        </button>
        <button type="button" aria-label="Task View" className="mr-[2px] flex w-12 items-center justify-center">
          <svg className="h-[14px] w-5" viewBox="0 0 20 14" fill="none" stroke="#fff"><path d="M4.500.5h11v13h-11zM3 2.500H.5v9H3M17 2.500h2.500v9H17" /></svg>
        </button>
        <div className="flex flex-1">
          {apps.map((a) => (
            <button
              key={a.name}
              type="button"
              aria-label={a.name}
              className={`flex flex-1 flex-col items-center pt-2 ${a.state === "active" ? "bg-[#4d4e50]" : ""}`}
            >
              <span className="flex size-6 items-center justify-center">{a.art}</span>
              {a.state === "active" && <span className="mt-auto h-[2px] w-full bg-[#ffa7b5]" />}
              {a.state === "open" && <span className="mt-auto h-[2px] w-[29px] bg-[#ffa7b5]" />}
              {a.state === "multi" && <span className="mt-auto h-[2px] w-[29px] border-r-8 border-[#c67f8b] bg-[#ffa7b5]" />}
            </button>
          ))}
        </div>
      </div>
      <div className="relative flex w-[194px] shrink-0 items-center">
        <div className="flex h-full w-[17px] flex-col items-center justify-between bg-[#f0f0f0] py-[6px]">
          <svg className="h-[6px] w-2" viewBox="0 0 8 6" fill="none" stroke="#555" strokeWidth="1.6"><path d="m.8 5 3.200-3.500L7.200 5" /></svg>
          <svg className="h-[6px] w-2" viewBox="0 0 8 6" fill="none" stroke="#555" strokeWidth="1.6"><path d="m.8 1 3.200 3.500L7.200 1" /></svg>
        </div>
        <button type="button" aria-label="Show hidden icons" className="ml-[6px]">
          <svg className="h-[7px] w-3" viewBox="0 0 12 7" fill="none" stroke="#fff" strokeWidth="1.2"><path d="m.5 6.500 5.500-5.500 5.500 5.500" /></svg>
        </button>
        <button type="button" className="w-[47px] text-center">ENG</button>
        <div className="w-[54px] whitespace-nowrap text-center leading-[18px]"><p>12:05 PM</p><p>3/19/2021</p></div>
        <button type="button" aria-label="Notifications" className="ml-[17px]">
          <svg className="size-4" viewBox="0 0 16 16"><path d="M0 0h16v12h-5v4l-4-4H0z" fill="#fff" /><path d="M3 3.500h10M3 6h10M3 8.500h6" stroke="#1b1b1b" /></svg>
        </button>
        <span className="ml-auto mr-1 h-full w-px bg-[#5a4c4c]" />
      </div>
    </footer>
  );
}

export default function App() {
  return (
    <div className="flex h-screen flex-col overflow-hidden bg-white font-['Open_Sans','Noto_Sans',sans-serif]">
      <TabStrip />
      <Toolbar />
      <BookmarksBar />
      <div className="flex min-h-0 flex-1">
        <TriviaPage />
        <Scrollbar />
      </div>
      <Taskbar />
    </div>
  );
}
